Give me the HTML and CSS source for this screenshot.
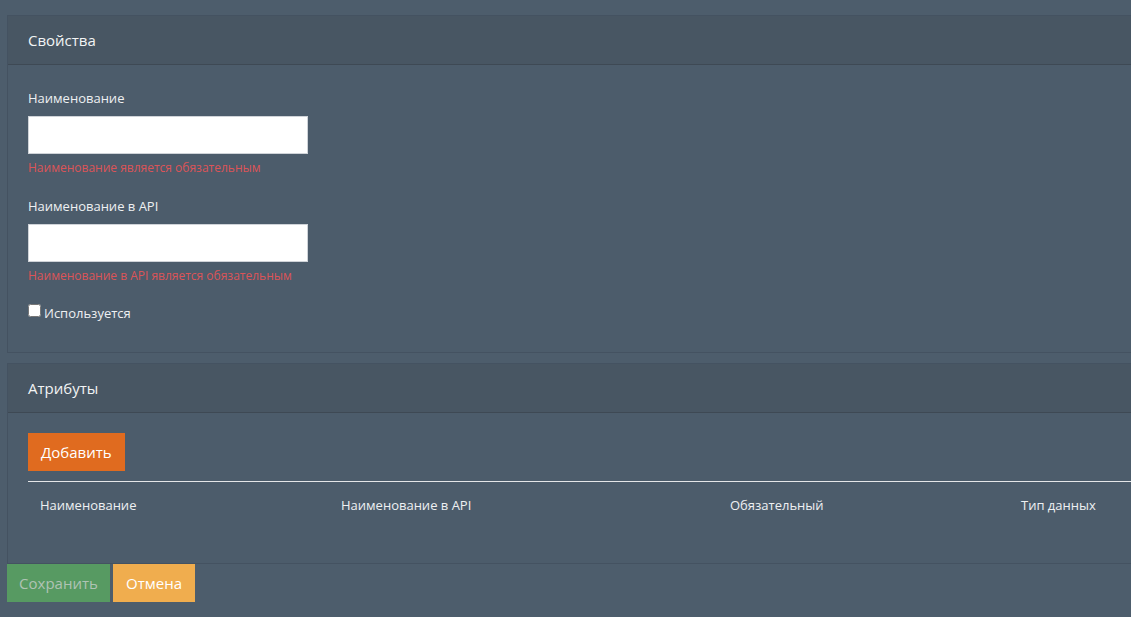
FILE: index.html
```html
<!DOCTYPE html>
<html lang="ru">
<head>
<meta charset="utf-8">
<title>Свойства</title>
<link rel="stylesheet" href="styles.css">
</head>
<body>
<div class="page">
  <section class="panel">
    <header class="panel-heading">Свойства</header>
    <div class="panel-body props">
      <div class="form-group">
        <label class="field-label" for="name">Наименование</label>
        <input class="field-input" id="name" type="text">
        <div class="field-error">Наименование является обязательным</div>
      </div>
      <div class="form-group">
        <label class="field-label" for="apiName">Наименование в API</label>
        <input class="field-input" id="apiName" type="text">
        <div class="field-error">Наименование в API является обязательным</div>
      </div>
      <label class="check">
        <input type="checkbox" class="check-box">
        <span>Используется</span>
      </label>
    </div>
  </section>

  <section class="panel panel-attrs">
    <header class="panel-heading">Атрибуты</header>
    <div class="panel-body attrs">
      <button class="btn btn-add" type="button">Добавить</button>
      <div class="attr-table">
        <div class="attr-head">
          <div class="attr-th">Наименование</div>
          <div class="attr-th">Наименование в API</div>
          <div class="attr-th">Обязательный</div>
          <div class="attr-th">Тип данных</div>
        </div>
      </div>
    </div>
  </section>

  <div class="actions">
    <button class="btn btn-save" type="button" disabled>Сохранить</button>
    <button class="btn btn-cancel" type="button">Отмена</button>
  </div>
</div>
</body>
</html>
```

FILE: styles.css
```css
html, body {
  margin: 0;
  padding: 0;
  background: #4d5d6c;
  overflow: hidden;
}

body {
  font-family: "Open Sans", "DejaVu Sans", sans-serif;
  font-size: 13px;
  color: #eef0f2;
}

.page {
  width: 1180px;
  padding: 15px 0 0 7px;
}

.panel {
  border: 1px solid #445261;
  border-right: none;
  background: #4c5c6b;
}

.panel-attrs {
  margin-top: 10px;
}

.panel-heading {
  height: 48px;
  display: flex;
  align-items: center;
  padding: 0 20px;
  background: #485663;
  border-bottom: 1px solid #3e4954;
  font-size: 15px;
  color: #f2f4f5;
}

.props {
  padding: 24px 20px 31px;
}

.form-group {
  display: flex;
  flex-direction: column;
  align-items: flex-start;
  margin-bottom: 21px;
}

.field-label {
  line-height: 18px;
  margin-bottom: 9px;
}

.field-input {
  box-sizing: border-box;
  width: 280px;
  height: 38px;
  margin: 0;
  border: 1px solid #cfd3d8;
  background: #fff;
  font: inherit;
}

.field-error {
  margin-top: 5px;
  font-size: 12px;
  line-height: 17px;
  color: #dc5458;
}

.check {
  display: flex;
  align-items: flex-start;
  line-height: 16px;
  margin-top: 1px;
}

.check-box {
  width: 13px;
  height: 13px;
  margin: -1px 3px 0 0;
}

.attrs {
  padding: 20px 0 35px 20px;
}

.btn {
  box-sizing: border-box;
  height: 38px;
  border: none;
  border-radius: 0;
  margin: 0;
  font-family: inherit;
  font-size: 15px;
  color: #fff;
  cursor: pointer;
}

.btn-add {
  display: block;
  padding: 0 13px;
  background: #e06b1f;
}

.attr-table {
  margin-top: 10px;
  border-top: 1px solid #e4e6e8;
}

.attr-head {
  display: grid;
  grid-template-columns: 301px 389px 291px auto;
}

.attr-th {
  padding: 14px 12px;
  line-height: 18px;
}

.actions {
  display: flex;
  gap: 3px;
}

.btn-save {
  width: 103px;
  background: #579a62;
  color: #afc3b4;
  cursor: default;
}

.btn-cancel {
  width: 82px;
  background: #f0ad4e;
}
```
